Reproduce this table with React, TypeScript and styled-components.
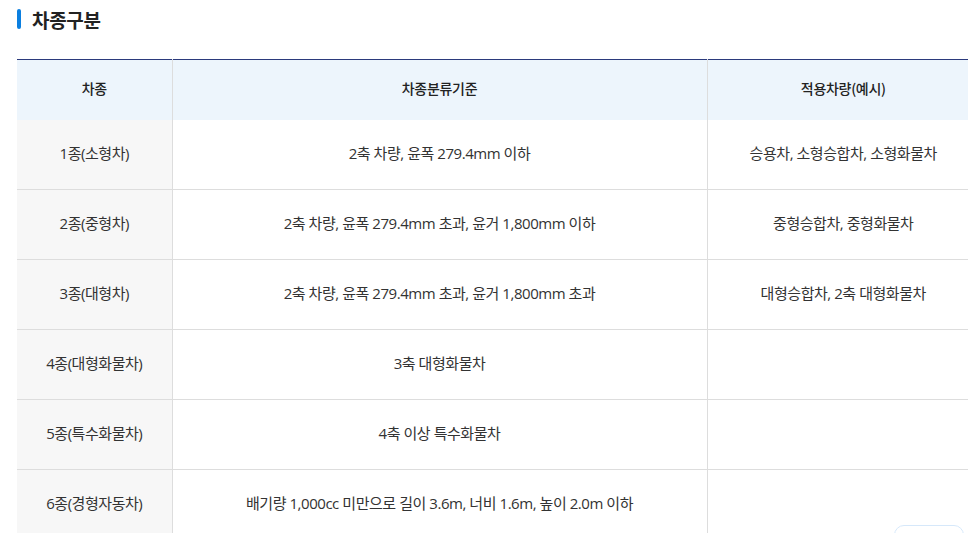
import React from 'react';
import styled, { createGlobalStyle } from 'styled-components';

const GlobalStyle = createGlobalStyle`
  html, body {
    margin: 0;
    padding: 0;
    background: #fff;
    overflow: hidden;
  }
  body {
    font-family: "Open Sans", "Noto Sans CJK KR", sans-serif;
    color: #333;
  }
`;

const Page = styled.div`
  padding: 0 0 0 17px;
  width: 962px;
`;

const Title = styled.h3`
  display: flex;
  align-items: center;
  gap: 11px;
  margin: 0;
  padding-top: 6px;
  height: 26px;
  font-family: "Noto Sans CJK KR", sans-serif;
  font-size: 19px;
  font-weight: 700;
  color: #222;
  letter-spacing: -0.3px;

  &::before {
    content: '';
    width: 4px;
    height: 20px;
    border-radius: 2px;
    background: #0b7fe0;
  }
`;

const Table = styled.table`
  margin-top: 27px;
  width: 962px;
  border-collapse: collapse;
  table-layout: fixed;
  border-top: 1px solid #2b3a7c;
  font-size: 15px;
  letter-spacing: -0.45px;
`;

const Th = styled.th`
  height: 56px;
  padding: 0 0 4px;
  background: #edf5fc;
  font-family: "Noto Sans CJK KR", sans-serif;
  font-size: 14px;
  letter-spacing: -0.3px;
  font-weight: 500;
  color: #222;
  text-align: center;
  border-left: 1px solid #ddd;

  &:first-child {
    border-left: none;
  }
`;

const Row = styled.tr`
  border-bottom: 1px solid #ddd;
`;

const Td = styled.td<{ $head?: boolean }>`
  height: 64px;
  padding: 0 0 5px;
  text-align: center;
  color: #333;
  font-weight: 400;
  background: ${(p) => (p.$head ? '#f7f7f7' : '#fff')};
  border-left: ${(p) => (p.$head ? 'none' : '1px solid #ddd')};
`;

const TopButton = styled.div`
  position: fixed;
  left: 894px;
  top: 525px;
  width: 68px;
  height: 40px;
  border: 1px solid #d6e8fa;
  border-radius: 10px;
  background: #fff;
`;

const rows = [
  ['1종(소형차)', '2축 차량, 윤폭 279.4mm 이하', '승용차, 소형승합차, 소형화물차'],
  ['2종(중형차)', '2축 차량, 윤폭 279.4mm 초과, 윤거 1,800mm 이하', '중형승합차, 중형화물차'],
  ['3종(대형차)', '2축 차량, 윤폭 279.4mm 초과, 윤거 1,800mm 초과', '대형승합차, 2축 대형화물차'],
  ['4종(대형화물차)', '3축 대형화물차', ''],
  ['5종(특수화물차)', '4축 이상 특수화물차', ''],
  ['6종(경형자동차)', '배기량 1,000cc 미만으로 길이 3.6m, 너비 1.6m, 높이 2.0m 이하', ''],
];

const App: React.FC = () => {
  return (
    <>
      <GlobalStyle />
      <Page>
        <Title>차종구분</Title>
        <Table>
          <colgroup>
            <col style={{ width: 155 }} />
            <col style={{ width: 535 }} />
            <col style={{ width: 272 }} />
          </colgroup>
          <thead>
            <tr>
              <Th>차종</Th>
              <Th>차종분류기준</Th>
              <Th>적용차량(예시)</Th>
            </tr>
          </thead>
          <tbody>
            {rows.map((r) => (
              <Row key={r[0]}>
                <Td $head>{r[0]}</Td>
                <Td>{r[1]}</Td>
                <Td>{r[2]}</Td>
              </Row>
            ))}
          </tbody>
        </Table>
      </Page>
      <TopButton />
    </>
  );
};

export default App;
